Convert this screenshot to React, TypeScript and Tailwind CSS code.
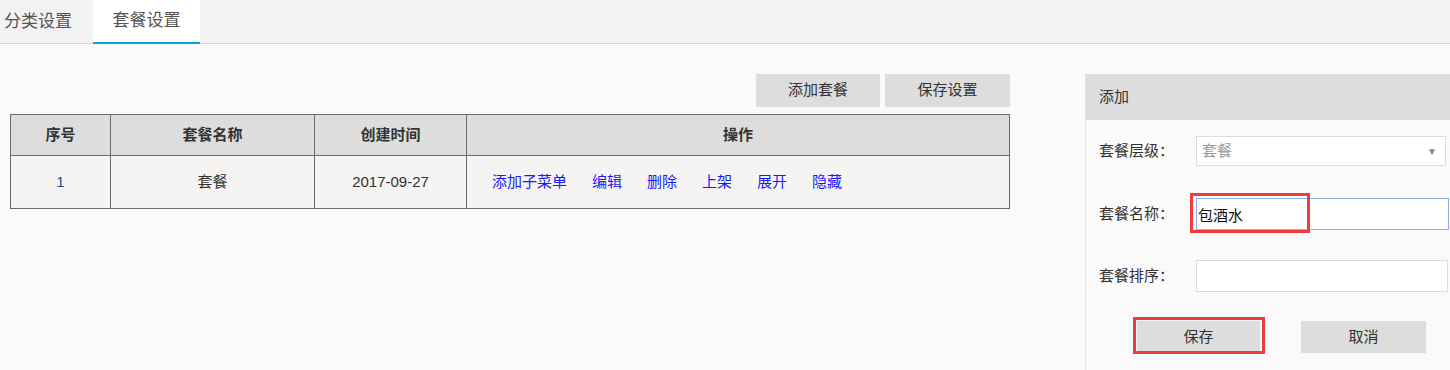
import React from "react";

const font = { fontFamily: '"Liberation Sans", "Noto Sans CJK SC", sans-serif' };

const links = ["添加子菜单", "编辑", "删除", "上架", "展开", "隐藏"];

export default function App() {
  return (
    <div className="w-[1450px] h-[370px] bg-[#fafafa] text-[#333] overflow-hidden" style={font}>
      {/* Tabs */}
      <div className="flex h-[44px] bg-[#f2f2f2] border-b border-[#d6d6d6]">
        <div className="w-[93px] pl-[4px] flex items-center text-[17px] text-[#555]">分类设置</div>
        <div className="w-[107px] bg-white border-b-2 border-[#0ea0d8] -mb-px flex items-center justify-center text-[17px] text-[#555]">
          套餐设置
        </div>
      </div>

      <div className="flex">
        {/* Left: table */}
        <div className="w-[1010px] pl-[10px] pt-[30px]">
          <div className="flex justify-end gap-[5px]">
            <button className="w-[124px] h-[33px] bg-[#dddddd] text-[15px] text-[#333]">添加套餐</button>
            <button className="w-[125px] h-[33px] bg-[#dddddd] text-[15px] text-[#333]">保存设置</button>
          </div>
          <table className="mt-[7px] w-[1000px] border-collapse text-[15px]">
            <thead>
              <tr className="h-[41px] bg-[#dddddd]">
                <th className="w-[100px] border border-[#6b6b6b] font-bold">序号</th>
                <th className="w-[204px] border border-[#6b6b6b] font-bold">套餐名称</th>
                <th className="w-[152px] border border-[#6b6b6b] font-bold">创建时间</th>
                <th className="border border-[#6b6b6b] font-bold">操作</th>
              </tr>
            </thead>
            <tbody>
              <tr className="h-[53px] bg-[#f5f4f2]">
                <td className="border border-[#6b6b6b] text-center text-[#1c4f8c]">1</td>
                <td className="border border-[#6b6b6b] text-center">套餐</td>
                <td className="border border-[#6b6b6b] text-center">2017-09-27</td>
                <td className="border border-[#6b6b6b] pl-[25px]">
                  <div className="flex gap-[25px]">
                    {links.map((l) => (
                      <a key={l} className="text-[#1a1aff] cursor-pointer">{l}</a>
                    ))}
                  </div>
                </td>
              </tr>
            </tbody>
          </table>
        </div>

        {/* Right: add panel */}
        <div className="ml-[75px] mt-[30px] w-[365px] h-[296px] border-l border-[#e2e2e2]">
          <div className="h-[46px] bg-[#dddddd] pl-[13px] flex items-center text-[15px]">添加</div>
          <div className="pl-[13px] pt-[16px] text-[15px]">
            <div className="flex items-center h-[30px]">
              <span className="w-[97px]">套餐层级：</span>
              <div className="w-[250px] h-[30px] bg-white border border-[#dcdcdc] flex items-center justify-between pl-[5px] pr-[8px]">
                <span className="text-[#999]">套餐</span>
                <span className="text-[10px] text-[#888]">▼</span>
              </div>
            </div>
            <div className="relative flex items-center h-[32px] mt-[32px]">
              <span className="w-[97px]">套餐名称：</span>
              <input
                className="w-[253px] h-[32px] bg-white border border-[#8fb0ea] outline-none pl-[1px] text-[15px] text-[#111]"
                defaultValue="包酒水"
                style={font}
              />
              <div className="absolute left-[91px] top-[-5px] w-[120px] h-[40px] border-[3px] border-[#ef3b3b] pointer-events-none" />
            </div>
            <div className="flex items-center h-[32px] mt-[30px]">
              <span className="w-[97px]">套餐排序：</span>
              <input className="w-[252px] h-[32px] bg-white border border-[#dcdcdc] outline-none" />
            </div>
            <div className="relative flex h-[32px] mt-[29px] pl-[38px] gap-[41px]">
              <button className="w-[123px] h-[32px] bg-[#dddddd] text-[15px]">保存</button>
              <button className="w-[125px] h-[32px] bg-[#dddddd] text-[15px]">取消</button>
              <div className="absolute left-[34px] top-[-4px] w-[132px] h-[37px] border-[3px] border-[#ef3b3b] pointer-events-none" />
            </div>
          </div>
        </div>
      </div>
    </div>
  );
}
